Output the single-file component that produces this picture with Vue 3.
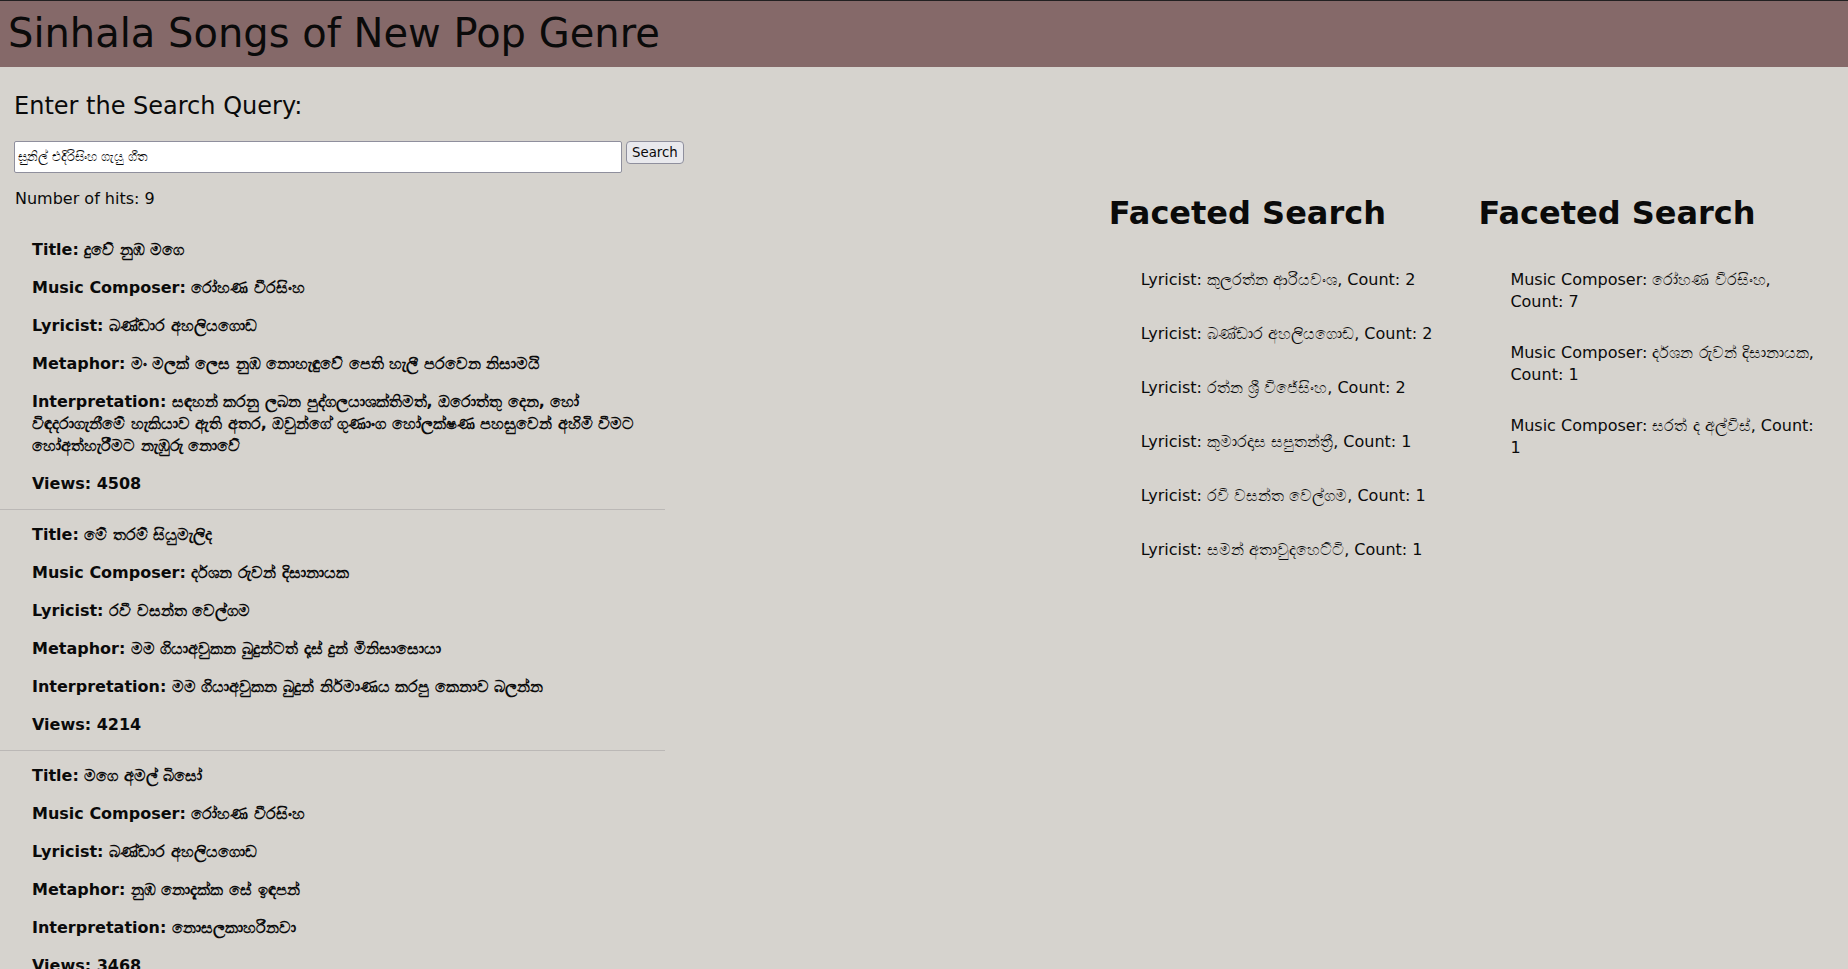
<script setup>
import { ref } from 'vue'

const query = ref('සුනිල් එදිරිසිංහ ගැයු ගීත')

const songs = [
  {
    title: 'දුවේ නුඹ මගෙ',
    composer: 'රෝහණ වීරසිංහ',
    lyricist: 'බණ්ඩාර අහලියගොඩ',
    metaphor: 'මං මලක් ලෙස නුඹ නොහැඳුවේ පෙති හැලී පරවෙන නිසාමයි',
    interpretation:
      'සඳහන් කරනු ලබන පුද්ගලයාශක්තිමත්, ඔරොත්තු දෙන, හෝ විඳදරාගැනීමේ හැකියාව ඇති අතර, ඔවුන්ගේ ගුණාංග හෝලක්ෂණ පහසුවෙන් අහිමි වීමට හෝඅත්හැරීමට නැඹුරු නොවේ',
    views: 4508,
  },
  {
    title: 'මේ තරම් සියුමැලිද',
    composer: 'දර්\u200cශන රුවන් දිසානායක',
    lyricist: 'රවී වසන්ත වෙල්ගම',
    metaphor: 'මම ගියාඅවුකන බුදුන්ටත් දෑස් දුන් මිනිසාසොයා',
    interpretation: 'මම ගියාඅවුකන බුදුන් නිර්\u200cමාණය කරපු කෙනාව බලන්න',
    views: 4214,
  },
  {
    title: 'මගෙ අමල් බිසෝ',
    composer: 'රෝහණ වීරසිංහ',
    lyricist: 'බණ්ඩාර අහලියගොඩ',
    metaphor: 'නුඹ නොදැක්ක සේ ඉඳපන්',
    interpretation: 'නොසලකාහරිනවා',
    views: 3468,
  },
]

const facets = [
  {
    label: 'Lyricist',
    items: [
      ['කුලරත්න ආරියවංශ', 2],
      ['බණ්ඩාර අහලියගොඩ', 2],
      ['රත්න ශ්‍රී විජේසිංහ', 2],
      ['කුමාරදාස සපුතන්ත්‍රී', 1],
      ['රවී වසන්ත වෙල්ගම', 1],
      ['සමන් අතාවුදහෙට්ටි', 1],
    ],
  },
  {
    label: 'Music Composer',
    items: [
      ['රෝහණ වීරසිංහ', 7],
      ['දර්\u200cශන රුවන් දිසානායක', 1],
      ['සරත් ද අල්විස්', 1],
    ],
  },
]
</script>

<template>
  <div class="page">
    <header class="banner"><h1>Sinhala Songs of New Pop Genre</h1></header>
    <form class="search" @submit.prevent>
      <label for="query">Enter the Search Query:</label>
      <div class="controls">
        <input id="query" v-model="query" type="text" />
        <button type="submit">Search</button>
      </div>
    </form>
    <main class="content">
      <section class="results">
        <p class="hits">Number of hits: 9</p>
        <article v-for="song in songs" :key="song.title" class="song">
          <p><b>Title: {{ song.title }}</b></p>
          <p><b>Music Composer: {{ song.composer }}</b></p>
          <p><b>Lyricist: {{ song.lyricist }}</b></p>
          <p><b>Metaphor: {{ song.metaphor }}</b></p>
          <p><b>Interpretation: {{ song.interpretation }}</b></p>
          <p><b>Views: {{ song.views }}</b></p>
        </article>
      </section>
      <section v-for="facet in facets" :key="facet.label" class="facet">
        <h2>Faceted Search</h2>
        <ul>
          <li v-for="[name, count] in facet.items" :key="name">
            {{ facet.label }}: <span class="name">{{ name }},</span> Count: {{ count }}
          </li>
        </ul>
      </section>
    </main>
  </div>
</template>

<style>
body {
  background: #d6d3ce;
}
</style>

<style scoped>
.page {
  height: 100vh;
  overflow: hidden;
  background: #d6d3ce;
  color: #0a0a0a;
  font-family: "DejaVu Sans", sans-serif;
  font-size: 16px;
}
.banner {
  padding: 7px 8px 9px;
  border-top: 1px solid #222021;
  background: #856969;
}
.banner h1 {
  margin: 0;
  font-size: 40px;
  font-weight: 400;
  line-height: 50px;
}
.search {
  padding: 25px 14px 0;
}
.search label {
  display: block;
  font-size: 24px;
  line-height: 28px;
}
.controls {
  display: flex;
  align-items: flex-start;
  gap: 4px;
  margin-top: 21px;
}
.controls input {
  box-sizing: border-box;
  flex: 0 1 608px;
  min-width: 0;
  height: 32px;
  padding: 1px 3px;
  border: 1px solid #8f8f9d;
  border-radius: 2px;
  background: #fff;
  color: #0a0a0a;
  font-family: "DejaVu Sans", sans-serif;
}
.controls button {
  height: 23px;
  padding: 0 5px;
  border: 1px solid #8f8f9d;
  border-radius: 4px;
  background: #e9e9ed;
  color: #0a0a0a;
  font-family: "DejaVu Sans", sans-serif;
}
.content {
  display: grid;
  grid-template-columns: 36fr 24fr 20fr 20fr;
}
.results {
  grid-column: 1;
}
.hits {
  margin: 16px 15px 0;
}
.song {
  padding: 14px 16px 14px 32px;
  border-bottom: 1px solid #bbb8b6;
  line-height: 22px;
}
.hits + .song {
  padding-top: 31px;
}
.song p {
  margin: 0 0 16px;
}
.song p:last-child {
  margin-bottom: 0;
}
.facet:nth-of-type(2) {
  grid-column: 3;
}
.facet {
  padding-top: 21px;
}
.facet h2 {
  margin: 0 0 38px;
  font-size: 32px;
  line-height: 38px;
}
.facet ul {
  margin: 0;
  padding: 0 32px;
  list-style: none;
}
.facet li {
  margin-bottom: 32px;
  line-height: 19px;
}
.name {
  display: inline-block;
  padding-bottom: 3px;
}
</style>
